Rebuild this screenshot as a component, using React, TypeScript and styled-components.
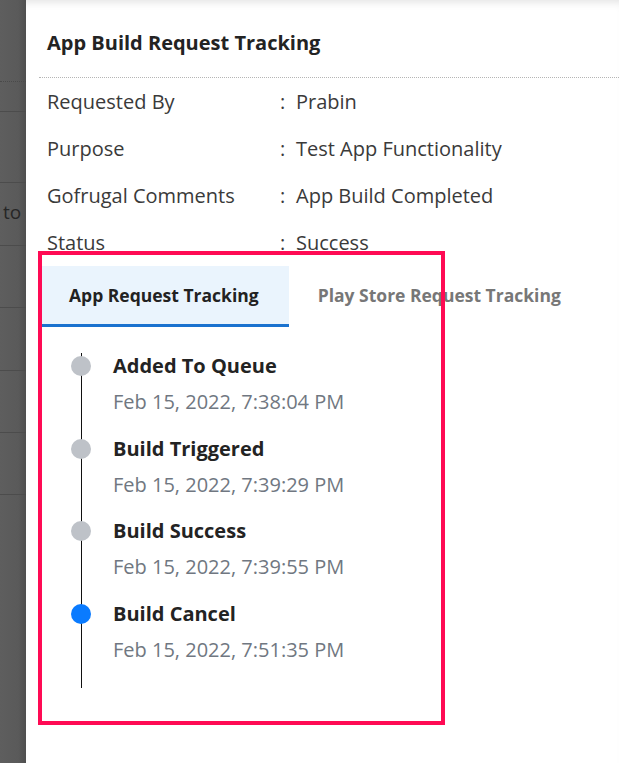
import React from "react";
import styled, { createGlobalStyle } from "styled-components";

interface IDetail {
  label: string;
  value: string;
}

interface IStep {
  title: string;
  date: string;
  active?: boolean;
}

const details: IDetail[] = [
  { label: "Requested By", value: "Prabin" },
  { label: "Purpose", value: "Test App Functionality" },
  { label: "Gofrugal Comments", value: "App Build Completed" },
  { label: "Status", value: "Success" },
];

const steps: IStep[] = [
  { title: "Added To Queue", date: "Feb 15, 2022, 7:38:04 PM" },
  { title: "Build Triggered", date: "Feb 15, 2022, 7:39:29 PM" },
  { title: "Build Success", date: "Feb 15, 2022, 7:39:55 PM" },
  { title: "Build Cancel", date: "Feb 15, 2022, 7:51:35 PM", active: true },
];

function App() {
  return (
    <>
      <GlobalStyle />
      <Page>
        <Backdrop>
          <BackdropRow height={82} dotted />
          <BackdropRow height={30} />
          <BackdropRow height={71} />
          <BackdropRow height={63}>to</BackdropRow>
          <BackdropRow height={62} />
          <BackdropRow height={63} />
          <BackdropRow height={62} />
          <BackdropRow height={62} />
        </Backdrop>
        <Drawer>
          <Header>
            <Title>App Build Request Tracking</Title>
          </Header>
          <Details>
            {details.map((d) => (
              <DetailRow key={d.label}>
                <Label>{d.label}</Label>
                <Colon>:</Colon>
                <Value>{d.value}</Value>
              </DetailRow>
            ))}
          </Details>
          <Tracking>
            <Tabs>
              <Tab active>App Request Tracking</Tab>
              <Tab>Play Store Request Tracking</Tab>
            </Tabs>
            <Timeline>
              {steps.map((s) => (
                <Step key={s.title} active={s.active}>
                  <StepTitle>{s.title}</StepTitle>
                  <StepDate>{s.date}</StepDate>
                </Step>
              ))}
            </Timeline>
          </Tracking>
        </Drawer>
      </Page>
    </>
  );
}

export default App;

const GlobalStyle = createGlobalStyle`
  html, body {
    margin: 0;
    padding: 0;
    height: 763px;
    overflow: hidden;
    background: #fff;
    font-family: "Open Sans", "Noto Sans", sans-serif;
  }
`;

const Page = styled.div`
  display: flex;
  width: 619px;
  height: 763px;
  overflow: hidden;
`;

const Backdrop = styled.div`
  width: 26px;
  flex-shrink: 0;
  display: flex;
  flex-direction: column;
  background: linear-gradient(to right, #5e5e5e 0%, #5a5a5a 70%, #4f4f4f 100%);
`;

const BackdropRow = styled.div<{ height: number; dotted?: boolean }>`
  height: ${(p) => p.height}px;
  flex-shrink: 0;
  box-sizing: border-box;
  border-bottom: 1px ${(p) => (p.dotted ? "dotted #4a4a4a" : "solid #4c4c4c")};
  font-size: 19px;
  line-height: ${(p) => p.height - 4}px;
  padding-left: 3px;
  color: #262626;
  overflow: hidden;
`;

const Drawer = styled.div`
  flex: 1;
  display: flex;
  flex-direction: column;
  background: #fff;
  box-shadow: inset 0 8px 8px -6px rgba(0, 0, 0, 0.12);
`;

const Header = styled.div`
  margin-left: 13px;
  padding: 26px 0 0 8px;
  height: 51px;
  border-bottom: 1px dotted #b5b5b5;
`;

const Title = styled.h1`
  margin: 0;
  font-size: 20px;
  line-height: 34px;
  font-weight: 700;
  color: #232323;
`;

const Details = styled.div`
  display: flex;
  flex-direction: column;
  padding-left: 21px;
`;

const DetailRow = styled.div`
  display: flex;
  align-items: center;
  height: 47px;
  font-size: 20px;
  color: #3a3a3a;
`;

const Label = styled.span`
  width: 233px;
`;

const Colon = styled.span`
  width: 16px;
`;

const Value = styled.span``;

const Tracking = styled.section`
  position: relative;
  margin-left: 16px;
  width: 399px;
  padding-bottom: 33px;

  &::after {
    content: "";
    position: absolute;
    top: -15px;
    left: -4px;
    right: -4px;
    bottom: -4px;
    border: 4px solid #ff0a54;
    pointer-events: none;
  }
`;

const Tabs = styled.div`
  display: flex;
  gap: 2px;
`;

const Tab = styled.div<{ active?: boolean }>`
  height: 58px;
  padding: 0 30px 0 27px;
  display: flex;
  align-items: center;
  font-size: 17.5px;
  font-weight: 700;
  white-space: nowrap;
  color: ${(p) => (p.active ? "#222" : "#777")};
  background: ${(p) => (p.active ? "#eaf4fd" : "transparent")};
  border-bottom: 3px solid ${(p) => (p.active ? "#1a72cf" : "transparent")};
`;

const Timeline = styled.div`
  margin: 39px 0 0 39px;
  border-left: 1px solid #111;
  padding-bottom: 5px;

  & > :first-child {
    margin-top: -13px;
  }
`;

const Step = styled.div<{ active?: boolean }>`
  position: relative;
  padding: 0 0 20.5px 31px;

  &::before {
    content: "";
    position: absolute;
    left: -11px;
    top: 3px;
    width: 20px;
    height: 20px;
    border-radius: 50%;
    background: ${(p) => (p.active ? "#0a7bff" : "#bec2c8")};
  }
`;

const StepTitle = styled.div`
  font-size: 20px;
  line-height: 26px;
  font-weight: 700;
  color: #232323;
`;

const StepDate = styled.div`
  margin-top: 10px;
  font-size: 20px;
  line-height: 26px;
  color: #707781;
`;
